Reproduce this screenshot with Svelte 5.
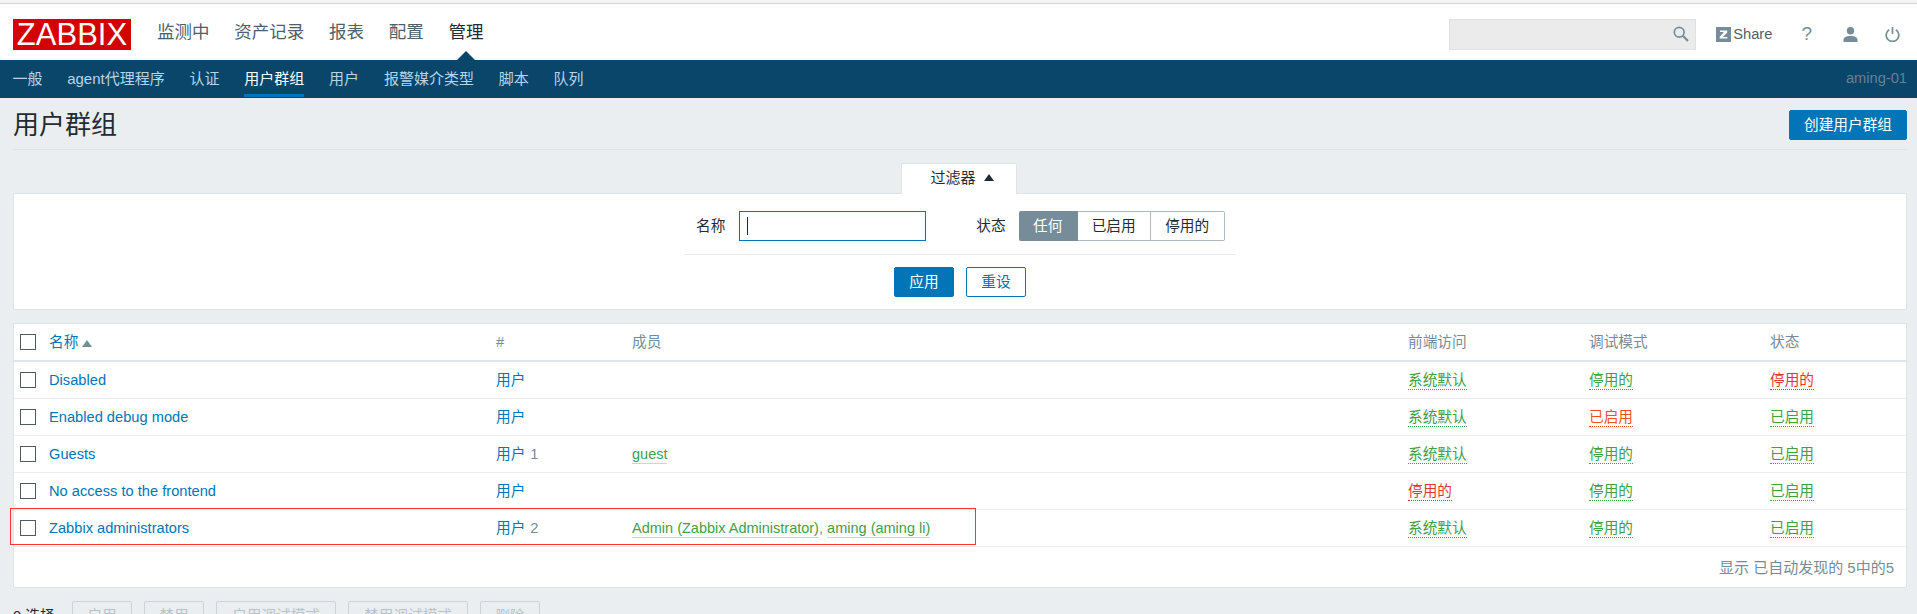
<script>
  const mainMenu = ["监测中", "资产记录", "报表", "配置", "管理"];
  const subMenu = ["一般", "agent代理程序", "认证", "用户群组", "用户", "报警媒介类型", "脚本", "队列"];
  const actions = ["启用", "禁用", "启用调试模式", "禁用调试模式", "删除"];

  // status: [text, color class]
  const groups = [
    { name: "Disabled", count: "", members: [], gui: ["系统默认", "green"], debug: ["停用的", "green"], status: ["停用的", "red"] },
    { name: "Enabled debug mode", count: "", members: [], gui: ["系统默认", "green"], debug: ["已启用", "orange"], status: ["已启用", "green"] },
    { name: "Guests", count: "1", members: ["guest"], gui: ["系统默认", "green"], debug: ["停用的", "green"], status: ["已启用", "green"] },
    { name: "No access to the frontend", count: "", members: [], gui: ["停用的", "red"], debug: ["停用的", "green"], status: ["已启用", "green"] },
    { name: "Zabbix administrators", count: "2", members: ["Admin (Zabbix Administrator)", "aming (aming li)"], gui: ["系统默认", "green"], debug: ["停用的", "green"], status: ["已启用", "green"] }
  ];
</script>

<div class="page">
  <div class="strip"></div>

  <header class="top">
    <div class="logo">ZABBIX</div>
    <nav class="main-nav">
      {#each mainMenu as item, i}
        <a class:active={i === 4}>{item}</a>
      {/each}
    </nav>
    <div class="tools">
      <div class="search">
        <svg width="16" height="16" viewBox="0 0 16 16">
          <circle cx="6.200" cy="6.200" r="4.900" fill="none" stroke="#768d99" stroke-width="1.700" />
          <path d="M9.800 9.800L15 15" stroke="#768d99" stroke-width="2.200" />
        </svg>
      </div>
      <div class="share">
        <svg width="15" height="15" viewBox="0 0 15 15">
          <rect width="15" height="15" fill="#768d99" />
          <path d="M4 3.500h7.200v1.900L6.900 10h4.400v1.600H3.700V9.700L8 5.100H4z" fill="#fff" />
        </svg>
        <span>Share</span>
      </div>
      <span class="help">?</span>
      <svg class="user" width="15" height="15" viewBox="0 0 15 15">
        <circle cx="7.500" cy="3.700" r="3.700" fill="#768d99" />
        <path d="M0.500 15v-2c0-2.600 2.800-4 7-4s7 1.400 7 4v2z" fill="#768d99" />
      </svg>
      <svg class="power" width="15" height="15" viewBox="0 0 15 15">
        <path d="M4.200 2.800A6.300 6.300 0 1 0 10.800 2.800" fill="none" stroke="#768d99" stroke-width="1.700" />
        <path d="M7.500 0v7" stroke="#768d99" stroke-width="1.700" />
      </svg>
    </div>
  </header>

  <nav class="sub-nav">
    <div class="sub-links">
      {#each subMenu as item, i}
        <a class:active={i === 3}>{item}</a>
      {/each}
    </div>
    <span class="server">aming-01</span>
  </nav>

  <main class="content">
    <div class="title-row">
      <h1>用户群组</h1>
      <button class="btn">创建用户群组</button>
    </div>

    <div class="filter-tab">过滤器 <span class="arrow"></span></div>
    <section class="filter">
      <div class="filter-fields">
        <span class="field-label">名称</span>
        <div class="input"><span class="caret"></span></div>
        <span class="status-label">状态</span>
        <div class="segments">
          <span class="on">任何</span>
          <span>已启用</span>
          <span>停用的</span>
        </div>
      </div>
      <div class="filter-buttons">
        <button class="btn">应用</button>
        <button class="btn alt">重设</button>
      </div>
    </section>

    <section class="list">
      <table>
        <thead>
          <tr>
            <th class="col-check"><span class="check"></span></th>
            <th class="col-name"><a class="link">名称</a><span class="sort"></span></th>
            <th class="col-count">#</th>
            <th class="col-members">成员</th>
            <th class="col-gui">前端访问</th>
            <th class="col-debug">调试模式</th>
            <th>状态</th>
          </tr>
        </thead>
        <tbody>
          {#each groups as g}
            <tr>
              <td><span class="check"></span></td>
              <td><a class="link">{g.name}</a></td>
              <td><a class="link">用户</a>{#if g.count}<span class="count">{g.count}</span>{/if}</td>
              <td>
                {#each g.members as m, i}{#if i > 0}<span class="comma">{", "}</span>{/if}<a class="member">{m}</a>{/each}
              </td>
              <td><a class="state {g.gui[1]}">{g.gui[0]}</a></td>
              <td><a class="state {g.debug[1]}">{g.debug[0]}</a></td>
              <td><a class="state {g.status[1]}">{g.status[0]}</a></td>
            </tr>
          {/each}
        </tbody>
      </table>
      <div class="paging">显示 已自动发现的 5中的5</div>
      <div class="mark"></div>
    </section>

    <div class="actions">
      <span class="selected">0 选择</span>
      {#each actions as a}
        <button class="btn-off">{a}</button>
      {/each}
    </div>
  </main>
</div>

<style>
  :global(body) {
    background: #ebeef0;
  }

  .page {
    height: 614px;
    overflow: hidden;
    font-family: "Liberation Sans", "Noto Sans CJK SC", sans-serif;
    font-size: 14.67px;
    line-height: 18px;
    color: #1f2c33;
  }

  .strip {
    height: 3px;
    background: #f4f4f4;
    border-bottom: 1px solid #d4d4d4;
  }

  /* ----- Header ----- */

  .top {
    height: 56px;
    background: #fff;
    display: flex;
    align-items: center;
    padding: 0 17px 0 13px;
    position: relative;
  }

  .logo {
    width: 118px;
    height: 31px;
    background: #d40000;
    color: #fff;
    font-size: 31px;
    line-height: 32px;
    text-align: center;
    margin-top: 4px;
  }

  .main-nav {
    display: flex;
    margin-left: 13.500px;
    font-size: 17.500px;
  }

  .main-nav a {
    padding: 0 12.400px;
    color: #4f5f69;
  }

  .main-nav a.active {
    color: #1f2c33;
    position: relative;
  }

  .main-nav a.active::after {
    content: "";
    position: absolute;
    left: 50%;
    bottom: -19px;
    margin-left: -9px;
    border: 9px solid transparent;
    border-top: 0;
    border-bottom-color: #0a466a;
  }

  .tools {
    margin-left: auto;
    display: flex;
    align-items: center;
    margin-top: 4px;
  }

  .search {
    width: 247px;
    height: 31px;
    box-sizing: border-box;
    background: #ebebeb;
    border: 1px solid #e0e0e0;
    display: flex;
    align-items: center;
    justify-content: flex-end;
    padding-right: 6px;
  }

  .share {
    display: flex;
    align-items: center;
    gap: 2px;
    margin-left: 20px;
    color: #4f5f69;
  }

  .help {
    font-size: 19px;
    color: #768d99;
    margin-left: 29px;
  }

  .user {
    margin-left: 31px;
  }

  .power {
    margin-left: 27px;
  }

  .sub-nav {
    height: 38px;
    background: #0a466a;
    display: flex;
    justify-content: space-between;
    padding: 0 10px 0 0;
  }

  .sub-links {
    display: flex;
    font-size: 15px;
  }

  .sub-links a {
    padding: 0 12.400px;
    line-height: 37px;
    height: 38px;
    box-sizing: border-box;
    color: #b5d6e8;
    position: relative;
  }

  .sub-links a.active {
    color: #fff;
  }

  .sub-links a.active::after {
    content: "";
    position: absolute;
    left: 12.400px;
    right: 12.400px;
    bottom: 1px;
    height: 3px;
    background: #0275b8;
  }

  .server {
    line-height: 37px;
    color: #68808f;
  }

  /* ----- Content ----- */

  .content {
    padding: 0 10px 0 13px;
  }

  .title-row {
    height: 52px;
    box-sizing: border-box;
    padding-top: 3px;
    border-bottom: 1px solid #dfe4e7;
    display: flex;
    align-items: center;
    justify-content: space-between;
  }

  h1 {
    margin: 0;
    font-size: 26px;
    font-weight: 400;
    line-height: 32px;
  }

  .btn {
    height: 30px;
    box-sizing: border-box;
    background: #0275b8;
    color: #fff;
    border: 1px solid #0275b8;
    border-radius: 2px;
    font: inherit;
    padding: 0 14px;
  }

  .btn.alt {
    background: #fff;
    color: #0275b8;
  }

  .filter-tab {
    width: 116px;
    height: 31px;
    box-sizing: border-box;
    margin: 13px auto -1px;
    position: relative;
    left: -1px;
    z-index: 1;
    background: #fff;
    border: 1px solid #dfe4e7;
    border-bottom: 0;
    border-radius: 2px 2px 0 0;
    text-align: center;
    font-size: 15px;
    line-height: 28px;
    padding-left: 6px;
  }

  .arrow {
    display: inline-block;
    margin-left: 4px;
    vertical-align: 2px;
    border: 5px solid transparent;
    border-top: 0;
    border-bottom: 7px solid #1f2c33;
  }

  .filter {
    height: 117px;
    box-sizing: border-box;
    background: #fff;
    border: 1px solid #dfe4e7;
  }

  .filter-fields {
    width: 552px;
    margin: 17px auto 0;
    height: 44px;
    box-sizing: border-box;
    border-bottom: 1px solid #ebeef0;
    display: flex;
    align-items: flex-start;
  }

  .field-label,
  .status-label {
    line-height: 30px;
  }

  .field-label {
    margin-left: 12px;
  }

  .input {
    width: 187px;
    height: 30px;
    box-sizing: border-box;
    border: 1px solid #0275b8;
    margin-left: 14px;
    padding: 5px 7px;
  }

  .caret {
    display: block;
    width: 1px;
    height: 18px;
    background: #1f2c33;
  }

  .status-label {
    margin-left: 50px;
  }

  .segments {
    display: flex;
    margin-left: 13px;
    height: 30px;
  }

  .segments span {
    box-sizing: border-box;
    border: 1px solid #acbbc2;
    border-left: 0;
    line-height: 28px;
    text-align: center;
    width: 74px;
  }

  .segments span.on {
    width: 59px;
    background: #768d99;
    border-color: #768d99;
    color: #fff;
    border-radius: 2px 0 0 2px;
  }

  .segments span:nth-child(2) {
    width: 73px;
  }

  .segments span:last-child {
    border-radius: 0 2px 2px 0;
  }

  .filter-buttons {
    display: flex;
    justify-content: center;
    gap: 12px;
    margin-top: 12px;
  }

  .filter-buttons .btn {
    width: 60px;
    padding: 0;
  }

  .list {
    margin-top: 13px;
    height: 265px;
    box-sizing: border-box;
    background: #fff;
    border: 1px solid #dfe4e7;
    position: relative;
  }

  table {
    width: 100%;
    border-collapse: collapse;
    table-layout: fixed;
  }

  th {
    height: 36px;
    padding: 0;
    text-align: left;
    font-weight: 400;
    color: #768d99;
    border-bottom: 2px solid #dfe4e7;
  }

  td {
    height: 36px;
    padding: 0;
    border-bottom: 1px solid #ebeef0;
  }

  .col-check {
    width: 35px;
  }

  .col-name {
    width: 447px;
  }

  .col-count {
    width: 136px;
  }

  .col-members {
    width: 776px;
  }

  .col-gui,
  .col-debug {
    width: 181px;
  }

  .check {
    display: block;
    width: 16px;
    height: 16px;
    box-sizing: border-box;
    margin-left: 6px;
    background: #fff;
    border: 1px solid #4f5b62;
  }

  .link {
    color: #0275b8;
  }

  .sort {
    display: inline-block;
    margin-left: 4px;
    border: 5px solid transparent;
    border-top: 0;
    border-bottom: 7px solid #768d99;
  }

  .count {
    color: #768d99;
    margin-left: 5px;
  }

  .member {
    color: #429e47;
    font-size: 14.500px;
    border-bottom: 1px solid #ccd5d9;
    padding-bottom: 1px;
  }

  .comma {
    color: #768d99;
  }

  .state {
    padding-bottom: 1px;
    border-bottom: 1px dotted;
  }

  .green {
    color: #429e47;
  }

  .red {
    color: #e33734;
  }

  .orange {
    color: #f24f1d;
  }

  .paging {
    color: #768d99;
    font-size: 15px;
    text-align: right;
    padding: 12px 12px 0 0;
  }

  /* red annotation over the last row */
  .mark {
    position: absolute;
    left: -4px;
    top: 184px;
    width: 966px;
    height: 37px;
    box-sizing: border-box;
    border: 1px solid #f33;
  }

  .actions {
    display: flex;
    align-items: center;
    margin-top: 13px;
  }

  .selected {
    color: #1f2c33;
    width: 59px;
  }

  .btn-off {
    height: 30px;
    width: 60px;
    box-sizing: border-box;
    margin-right: 12px;
    background: #ebeef0;
    color: #b9c4ca;
    border: 1px solid #cdd4d8;
    border-radius: 2px;
    font: inherit;
    padding: 0;
  }

  .btn-off:nth-of-type(3),
  .btn-off:nth-of-type(4) {
    width: 120px;
  }
</style>
